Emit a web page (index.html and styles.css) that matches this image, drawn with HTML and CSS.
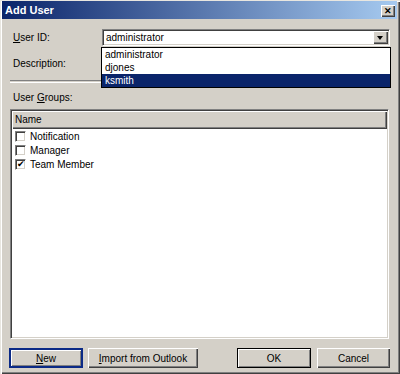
FILE: index.html
```
<!DOCTYPE html>
<html lang="en">
<head>
	<meta charset="UTF-8">
	<title>Add User</title>
	<link rel="stylesheet" href="styles.css">
</head>
<body>
	<div class="dialog">
		<div class="titlebar">
			<span class="title">Add User</span>
			<span class="close-btn">&#x2715;</span>
		</div>

		<div class="content">
			<div class="field-row">
				<label class="field-label"><u>U</u>ser ID:</label>
				<div class="combo">
					<span class="combo-value">administrator</span>
					<span class="combo-arrow"></span>
					<ul class="combo-list">
						<li>administrator</li>
						<li>djones</li>
						<li class="selected">ksmith</li>
					</ul>
				</div>
			</div>

			<div class="field-row desc-row">
				<label class="field-label">Description:</label>
			</div>

			<div class="separator"></div>

			<div class="groups-label">User <u>G</u>roups:</div>

			<div class="listview">
				<div class="list-header">Name</div>
				<div class="list-row"><span class="check"></span>Notification</div>
				<div class="list-row"><span class="check"></span>Manager</div>
				<div class="list-row"><span class="check checked">&#x2714;</span>Team Member</div>
			</div>

			<div class="buttons">
				<button class="btn btn-new"><u>N</u>ew</button>
				<button class="btn btn-import"><u>I</u>mport from Outlook</button>
				<button class="btn btn-ok">OK</button>
				<button class="btn btn-cancel">Cancel</button>
			</div>
		</div>
	</div>
</body>
</html>
```

FILE: styles.css
```
body {
	margin: 0;
	padding: 0;
	font-family: 'Liberation Sans', Arial, sans-serif;
	font-size: 10px;
	color: #000;
	background: #d4d0c8;
}

.dialog {
	width: 400px;
	height: 374px;
	box-sizing: border-box;
	background: #d4d0c8;
	box-shadow: inset 1px 1px 0 #e8e6e0, inset 2px 2px 0 #fff, inset -1px -1px 0 #404040, inset -2px -2px 0 #808080;
	overflow: hidden;
}

.titlebar {
	height: 18px;
	margin: 1px 3px 0 2px;
	padding: 0 2px 0 3px;
	display: flex;
	align-items: center;
	justify-content: space-between;
	background: linear-gradient(to right, #0a246a, #a6caf0);
}

.title {
	color: #fff;
	font-weight: bold;
	font-size: 11px;
}

.close-btn {
	width: 14px;
	height: 12px;
	margin-top: 2px;
	background: #d4d0c8;
	box-shadow: inset 1px 1px 0 #fff, inset -1px -1px 0 #404040, inset -2px -2px 0 #808080;
	font-size: 9px;
	font-weight: bold;
	line-height: 12px;
	text-align: center;
	color: #000;
}

.content {
	padding: 10px 10px 0 10px;
}

.field-row {
	display: flex;
	align-items: center;
	height: 17px;
}

.field-label {
	width: 89px;
	padding-left: 3px;
}

.combo {
	position: relative;
	width: 288px;
	height: 17px;
	box-sizing: border-box;
	background: #fff;
	border-top: 1px solid #808080;
	border-left: 1px solid #808080;
	border-right: 1px solid #fff;
	border-bottom: 1px solid #fff;
	box-shadow: inset 1px 1px 0 #404040, inset -1px -1px 0 #d4d0c8;
	display: flex;
	align-items: center;
}

.combo-value {
	padding-left: 3px;
	flex: 1;
}

.combo-arrow {
	width: 15px;
	height: 13px;
	margin-right: 1px;
	background: #d4d0c8;
	box-shadow: inset 1px 1px 0 #fff, inset -1px -1px 0 #404040, inset -2px -2px 0 #808080;
	position: relative;
}

.combo-arrow::after {
	content: "";
	position: absolute;
	left: 4px;
	top: 5px;
	border-left: 3.5px solid transparent;
	border-right: 3.5px solid transparent;
	border-top: 4px solid #000;
}

.combo-list {
	position: absolute;
	top: 17px;
	left: -2px;
	width: 290px;
	margin: 0;
	padding: 0;
	list-style: none;
	background: #fff;
	border: 1px solid #000;
	box-sizing: border-box;
	z-index: 10;
}

.combo-list li {
	height: 13px;
	line-height: 14px;
	padding-left: 3px;
}

.combo-list li.selected {
	background: #0a246a;
	color: #fff;
}

.desc-row {
	margin-top: 10px;
	height: 14px;
}

.separator {
	margin-top: 10px;
	height: 1px;
	border-top: 1px solid #808080;
	border-bottom: 1px solid #fff;
}

.groups-label {
	margin-top: 8px;
	height: 14px;
	line-height: 14px;
	padding-left: 3px;
}

.listview {
	margin-top: 4px;
	margin-right: 1px;
	height: 230px;
	box-sizing: border-box;
	background: #fff;
	border-top: 1px solid #808080;
	border-left: 1px solid #808080;
	border-right: 1px solid #fff;
	border-bottom: 1px solid #fff;
	box-shadow: inset 1px 1px 0 #404040, inset -1px -1px 0 #d4d0c8;
	padding: 1px;
}

.list-header {
	height: 18px;
	line-height: 18px;
	padding-left: 3px;
	background: #d4d0c8;
	box-shadow: inset 1px 1px 0 #fff, inset -1px -1px 0 #404040, inset -2px -2px 0 #808080;
}

.list-row {
	height: 14px;
	display: flex;
	align-items: center;
	padding-left: 3px;
}

.check {
	width: 11px;
	height: 11px;
	box-sizing: border-box;
	margin-right: 4px;
	background: #fff;
	border-top: 1px solid #808080;
	border-left: 1px solid #808080;
	border-right: 1px solid #fff;
	border-bottom: 1px solid #fff;
	box-shadow: inset 1px 1px 0 #404040, inset -1px -1px 0 #d4d0c8;
	font-size: 9px;
	line-height: 9px;
	text-align: center;
}

.buttons {
	margin-top: 9px;
	margin-left: -1px;
	display: flex;
	height: 20px;
}

.btn {
	height: 20px;
	padding: 0;
	font-family: inherit;
	font-size: 10px;
	color: #000;
	background: #d4d0c8;
	border: none;
	box-shadow: inset 1px 1px 0 #fff, inset -1px -1px 0 #404040, inset -2px -2px 0 #808080;
}

.btn-new {
	width: 74px;
	box-shadow: inset 0 0 0 2px #0b2a86, inset 3px 3px 0 #fff, inset -3px -3px 0 #808080;
}

.btn-import {
	width: 110px;
	margin-left: 5px;
}

.btn-ok {
	width: 74px;
	margin-left: auto;
	box-shadow: inset 0 0 0 1px #000, inset 2px 2px 0 #fff, inset -2px -2px 0 #808080;
}

.btn-cancel {
	width: 73px;
	margin-left: 6px;
}
```
